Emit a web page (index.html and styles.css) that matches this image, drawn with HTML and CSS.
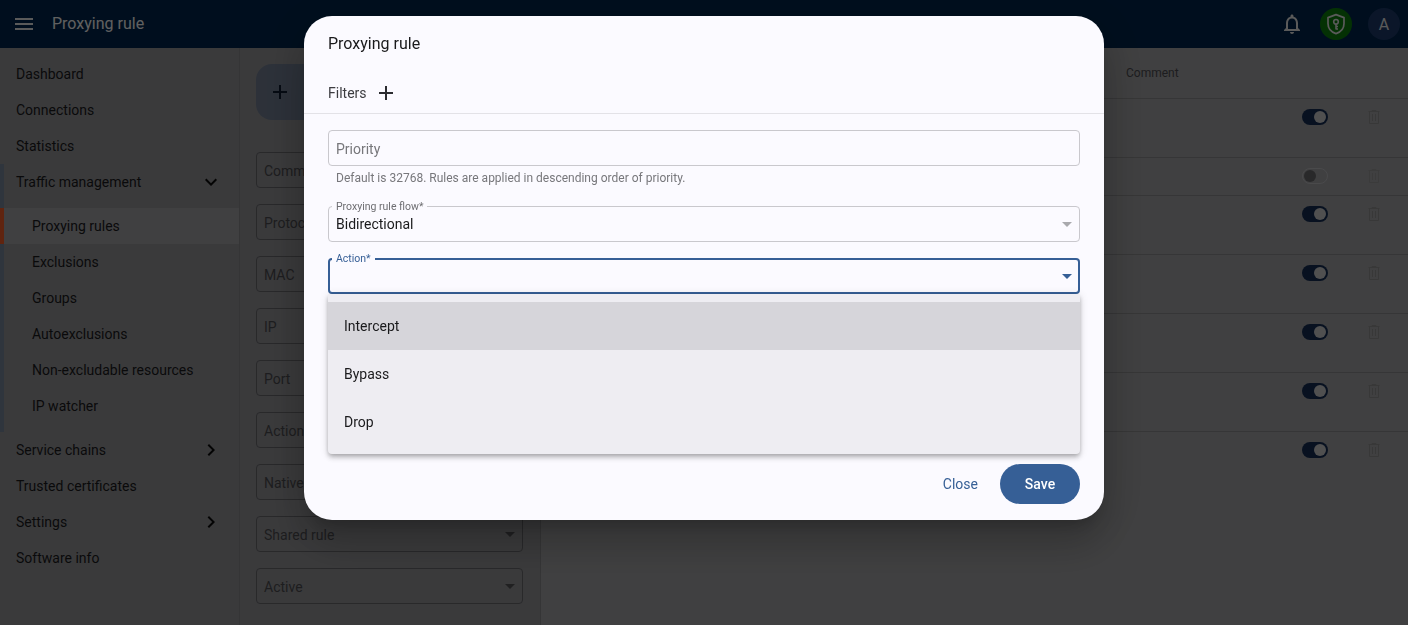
FILE: index.html
```html
<!DOCTYPE html>
<html lang="en">
<head>
<meta charset="utf-8">
<title>Proxying rule</title>
<link rel="stylesheet" href="styles.css">
</head>
<body>
<svg class="sprite" width="0" height="0" aria-hidden="true">
  <symbol id="i-menu" viewBox="0 0 24 24"><path d="M3 18h18v-2H3v2zm0-5h18v-2H3v2zm0-7v2h18V6H3z"/></symbol>
  <symbol id="i-more" viewBox="0 0 24 24"><path d="M16.59 8.59 12 13.17 7.41 8.59 6 10l6 6 6-6z"/></symbol>
  <symbol id="i-right" viewBox="0 0 24 24"><path d="M10 6 8.59 7.41 13.17 12l-4.58 4.59L10 18l6-6z"/></symbol>
  <symbol id="i-add" viewBox="0 0 24 24"><path d="M19 13h-6v6h-2v-6H5v-2h6V5h2v6h6v2z"/></symbol>
  <symbol id="i-bell" viewBox="0 0 24 24"><path d="M12 22c1.1 0 2-.9 2-2h-4c0 1.1.9 2 2 2zm6-6v-5c0-3.07-1.63-5.64-4.5-6.32V4c0-.83-.67-1.5-1.5-1.5s-1.5.67-1.5 1.5v.68C7.64 5.36 6 7.92 6 11v5l-2 2v1h16v-1l-2-2zm-2 1H8v-6c0-2.48 1.51-4.5 4-4.5s4 2.02 4 4.5v6z"/></symbol>
  <symbol id="i-shield" viewBox="0 0 24 24"><path fill="none" stroke="currentColor" stroke-width="1.7" stroke-linejoin="round" d="M12 2.6 20 5.6v6c0 4.8-3.3 8.6-8 10-4.7-1.400-8-5.200-8-10v-6z"/><circle cx="12" cy="9.800" r="2.300" fill="none" stroke="currentColor" stroke-width="1.600"/><path fill="none" stroke="currentColor" stroke-width="1.600" d="M12 12v5.500M12 14.500h2M12 17h2"/></symbol>
  <symbol id="i-trash" viewBox="0 0 12 14"><path fill="none" stroke="currentColor" d="M.5 1.500h11M4 1.500V.5h4v1M1.500 1.500v12h9v-12M4.500 4v7M7.500 4v7"/></symbol>
</svg>

<div class="app">
  <header class="topbar">
    <svg class="icon menu-icon"><use href="#i-menu"/></svg>
    <span class="page-title">Proxying rule</span>
    <div class="top-actions">
      <svg class="icon bell"><use href="#i-bell"/></svg>
      <span class="circle circle-green"><svg class="shield"><use href="#i-shield"/></svg></span>
      <span class="circle circle-blue">A</span>
    </div>
  </header>

  <div class="main">
    <nav class="sidebar">
      <a class="nav-item">Dashboard</a>
      <a class="nav-item">Connections</a>
      <a class="nav-item">Statistics</a>
      <div class="nav-group">
        <a class="nav-item">Traffic management<svg class="chev"><use href="#i-more"/></svg></a>
        <div class="subnav">
          <a class="nav-item sub current">Proxying rules</a>
          <a class="nav-item sub">Exclusions</a>
          <a class="nav-item sub">Groups</a>
          <a class="nav-item sub">Autoexclusions</a>
          <a class="nav-item sub">Non-excludable resources</a>
          <a class="nav-item sub">IP watcher</a>
        </div>
      </div>
      <a class="nav-item">Service chains<svg class="chev"><use href="#i-right"/></svg></a>
      <a class="nav-item">Trusted certificates</a>
      <a class="nav-item">Settings<svg class="chev"><use href="#i-right"/></svg></a>
      <a class="nav-item">Software info</a>
    </nav>

    <aside class="filters">
      <div class="add-btn"><svg class="icon add-plus"><use href="#i-add"/></svg></div>
      <div class="filter-list">
        <div class="filter">Comment</div>
        <div class="filter">Protocol</div>
        <div class="filter">MAC</div>
        <div class="filter">IP</div>
        <div class="filter">Port</div>
        <div class="filter">Action</div>
        <div class="filter">Native rule</div>
        <div class="filter has-arrow">Shared rule</div>
        <div class="filter has-arrow">Active</div>
      </div>
    </aside>

    <section class="table">
      <div class="thead">Comment</div>
      <div class="row"><span class="toggle on"></span><svg class="trash"><use href="#i-trash"/></svg></div>
      <div class="row short"><span class="toggle off"></span><svg class="trash faint"><use href="#i-trash"/></svg></div>
      <div class="row"><span class="toggle on"></span><svg class="trash"><use href="#i-trash"/></svg></div>
      <div class="row"><span class="toggle on"></span><svg class="trash"><use href="#i-trash"/></svg></div>
      <div class="row"><span class="toggle on"></span><svg class="trash"><use href="#i-trash"/></svg></div>
      <div class="row"><span class="toggle on"></span><svg class="trash"><use href="#i-trash"/></svg></div>
      <div class="row last"><span class="toggle on"></span><svg class="trash"><use href="#i-trash"/></svg></div>
    </section>
  </div>
</div>

<div class="backdrop">
  <div class="dialog">
    <h2 class="dialog-title">Proxying rule</h2>
    <div class="dialog-filters">Filters<svg class="icon dialog-plus"><use href="#i-add"/></svg></div>
    <div class="dialog-body">
      <div class="field">
        <div class="input placeholder">Priority</div>
        <p class="helper">Default is 32768. Rules are applied in descending order of priority.</p>
      </div>
      <div class="field">
        <div class="input select">
          <span class="float-label">Proxying rule flow*</span>
          Bidirectional
          <span class="arrow"></span>
        </div>
      </div>
      <div class="field action-field">
        <div class="input select focused">
          <span class="float-label">Action*</span>
          <span class="arrow"></span>
        </div>
        <ul class="menu">
          <li class="menu-item active">Intercept</li>
          <li class="menu-item">Bypass</li>
          <li class="menu-item">Drop</li>
        </ul>
      </div>
    </div>
    <div class="dialog-actions">
      <button class="btn-text">Close</button>
      <button class="btn-save">Save</button>
    </div>
  </div>
</div>
</body>
</html>
```

FILE: styles.css
```css
* { box-sizing: border-box; }
html, body { margin: 0; height: 100%; overflow: hidden; }
body { font-family: Roboto, "Liberation Sans", sans-serif; font-size: 14px; color: #111; background: #a0a0a2; }
.sprite { position: absolute; }

.app { height: 625px; display: flex; flex-direction: column; }
.topbar { height: 48px; flex: none; background: #02254b; color: #e0e0e0; display: flex; align-items: center; padding: 0 8px 0 12px; }
.icon { width: 24px; height: 24px; fill: currentColor; display: block; }
.page-title { margin-left: 16px; font-size: 16px; line-height: 24px; color: #f0f0f0; }
.top-actions { margin-left: auto; display: flex; align-items: center; }
.bell { margin-right: 16px; }
.circle { width: 32px; height: 32px; border-radius: 50%; display: flex; align-items: center; justify-content: center; }
.circle-green { background: #0c7c0c; margin-right: 16px; color: #e0e0e0; }
.circle-blue { background: #1c3968; font-size: 16px; color: #e0e0e0; }
.shield { width: 24px; height: 24px; }

.main { flex: 1; display: flex; min-height: 0; }
.sidebar { width: 240px; flex: none; padding-top: 8px; background: #929295; border-right: 1px solid #858587; }
.nav-item { height: 36px; display: flex; align-items: center; justify-content: space-between; padding: 0 16px; color: #1a1a1c; line-height: 20px; }
.chev { width: 24px; height: 24px; fill: #0a0a0a; margin-right: 0; }
.nav-group { border-left: 4px solid #76849a; }
.nav-group > .nav-item { padding-left: 12px; }
.subnav { padding: 8px 0; }
.nav-item.sub { padding-left: 28px; }
.nav-item.current { background: #a0a0a4; box-shadow: -4px 0 0 #f05a26; }

.filters { width: 301px; flex: none; padding: 16px 17px 0 16px; background: #929295; border-right: 1px solid #858587; }
.add-btn { height: 56px; border-radius: 16px; background: #707c90; color: #0e1c30; display: flex; align-items: center; padding-left: 12px; }
.filter-list { margin-top: 32px; display: flex; flex-direction: column; gap: 16px; }
.filter { height: 36px; border: 1px solid #66666a; border-radius: 4px; padding: 2px 7px 0; display: flex; align-items: center; color: #4a4a4e; position: relative; }
.has-arrow::after { content: ""; position: absolute; right: 7px; top: 15px; border: 5px solid transparent; border-top-color: #505054; border-bottom: 0; }

.table { flex: 1; min-width: 0; background: #a0a0a2; }
.thead { height: 51px; padding: 0 0 0 585px; display: flex; align-items: center; font-size: 12px; color: #4a4a4e; border-bottom: 1px solid #88888a; }
.row { height: 59px; display: flex; align-items: flex-start; padding: 10px 0 0 761px; border-bottom: 1px solid #88888a; }
.row.short { height: 38px; }
.row.last { border-bottom: 0; }
.toggle { width: 26px; height: 16px; border-radius: 8px; position: relative; display: block; }
.toggle::after { content: ""; position: absolute; top: 2px; width: 12px; height: 12px; border-radius: 50%; }
.toggle.on { background: #142c52; }
.toggle.on::after { right: 2px; background: #c8c8c8; }
.toggle.off { border: 1px solid #b8b8bc; }
.toggle.off::after { left: 1px; top: 1px; background: #66666a; }
.trash { width: 12px; height: 14px; margin: 1px 0 0 40px; color: #8c8c8c; }
.trash.faint { color: #959595; }

.backdrop { position: fixed; inset: 0; background: rgba(0, 0, 0, .6); display: flex; justify-content: center; align-items: flex-start; padding-top: 16px; }
.dialog { width: 800px; height: 504px; border-radius: 28px; background: #fbfaff; display: flex; flex-direction: column; box-shadow: 0 11px 15px -7px rgba(0,0,0,.2), 0 24px 38px 3px rgba(0,0,0,.14), 0 9px 46px 8px rgba(0,0,0,.12); }
.dialog-title { margin: 0; padding: 16px 24px 0; font-size: 16px; font-weight: 400; line-height: 24px; color: #1a1a1c; }
.dialog-filters { height: 33px; margin-top: 25px; padding: 0 24px 9px; display: flex; align-items: center; color: #3c3c40; border-bottom: 1px solid #e3e2e7; }
.dialog-plus { margin-left: 7px; color: #2b2c30; }
.dialog-body { flex: 1; padding: 16px 24px 0; display: flex; flex-direction: column; }
.field { position: relative; }
.input { height: 36px; border: 1px solid #c9c8cd; border-radius: 4px; padding: 2px 7px 0; display: flex; align-items: center; position: relative; color: #1a1a1c; }
.input.select { padding-top: 0; }
.placeholder { color: #77777b; }
.helper { margin: 5px 0 0 8px; height: 19px; font-size: 12px; line-height: 14px; color: #77777b; }
.field + .field { margin-top: 16px; }
.float-label { position: absolute; left: 3px; top: -6px; padding: 0 4px; background: #fbfaff; font-size: 10.5px; line-height: 12px; color: #6e6e72; }
.arrow { position: absolute; right: 7px; top: 15px; border: 5px solid transparent; border-top-color: #a9a9ad; border-bottom: 0; }
.focused { border: 2px solid #365f96; padding: 0 6px; }
.focused .float-label { left: 2px; top: -7px; color: #365f96; }
.focused .arrow { right: 6px; top: 14px; border-top-color: #365f96; }
.menu { position: absolute; left: 0; right: 0; top: 36px; margin: 0; padding: 8px 0; list-style: none; background: #eeedf2; border-radius: 0 0 4px 4px; box-shadow: 0 2px 4px -1px rgba(0,0,0,.2), 0 4px 5px rgba(0,0,0,.14), 0 1px 10px rgba(0,0,0,.12); }
.menu-item { height: 48px; padding: 0 16px; display: flex; align-items: center; color: #1a1a1c; }
.menu-item.active { background: #d6d5da; }
.dialog-actions { display: flex; justify-content: flex-end; align-items: center; padding: 0 24px 16px; gap: 22px; }
.btn-text, .btn-save { font: inherit; border: 0; background: none; padding: 0; cursor: pointer; }
.btn-text { color: #365f96; }
.btn-save { width: 80px; height: 40px; border-radius: 20px; background: #365f96; color: #fff; font-weight: 500; }
```
